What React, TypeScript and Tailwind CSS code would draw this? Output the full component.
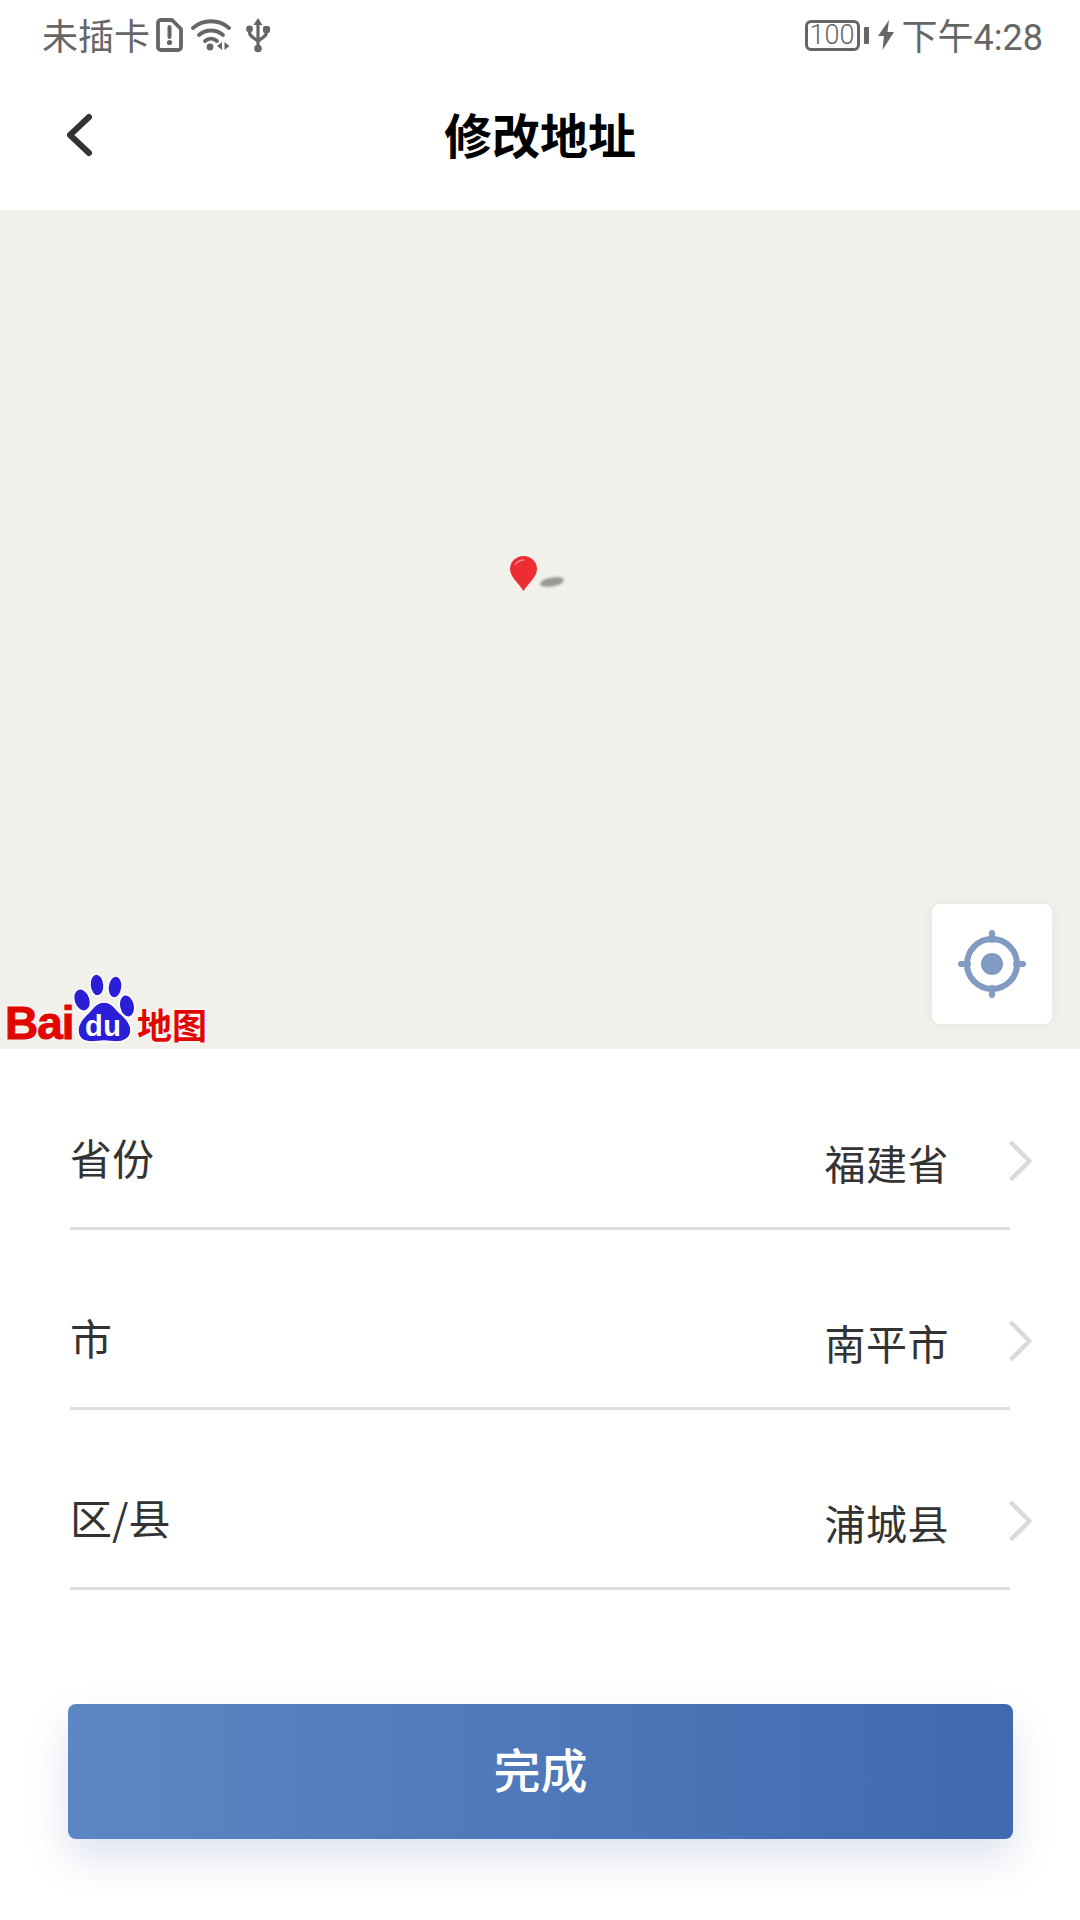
import { ChevronRight } from "lucide-react";

const addressRows = [
  { label: "省份", value: "福建省" },
  { label: "市", value: "南平市" },
  { label: "区/县", value: "浦城县" },
];

const cjk = "font-['Roboto','Noto_Sans_CJK_SC',sans-serif]";

function SimAlert() {
  return (
    <svg width="27" height="34" viewBox="0 0 27 34" fill="none">
      <path d="M5 2h11l9 9v18a3 3 0 0 1-3 3H5a3 3 0 0 1-3-3V5a3 3 0 0 1 3-3z" stroke="#666" strokeWidth="3.8" strokeLinejoin="round" />
      <path d="M13.500 9v10" stroke="#666" strokeWidth="4" strokeLinecap="round" />
      <circle cx="13.500" cy="24.500" r="2.600" fill="#666" />
    </svg>
  );
}

function WifiIcon() {
  return (
    <svg width="40" height="34" viewBox="0 0 40 34" fill="none">
      <path d="M2 10C12 1 28 1 38 10" stroke="#666" strokeWidth="3.800" strokeLinecap="round" />
      <path d="M8 17c7-6 17-6 24 0" stroke="#666" strokeWidth="3.800" strokeLinecap="round" />
      <path d="M14 23c3.500-3 8.500-3 12 0" stroke="#666" strokeWidth="3.800" strokeLinecap="round" />
      <circle cx="19" cy="29" r="3.400" fill="#666" />
      <path d="M31 24v8l-5-4zM33.500 24v8l5-4z" fill="#666" />
    </svg>
  );
}

function UsbIcon() {
  return (
    <svg width="24" height="36" viewBox="0 0 24 36" fill="none">
      <path d="M12 1l4.500 7h-9z" fill="#666" />
      <path d="M12 6v26" stroke="#666" strokeWidth="3.200" />
      <path d="M3.500 12v3c0 4 3 5 8.500 9M20.500 12v3c0 4-3 5-8.500 9" stroke="#666" strokeWidth="3.200" />
      <circle cx="3.500" cy="12" r="3.400" fill="#666" />
      <rect x="17" y="9" width="7" height="7" rx="2" fill="#666" />
      <circle cx="12" cy="31.500" r="3.800" fill="#666" />
    </svg>
  );
}

function ChargeBolt() {
  return (
    <svg width="16" height="30" viewBox="0 0 16 30">
      <path d="M11 0 0 16h6l-1.500 14L16 12H9.500z" fill="#666" />
    </svg>
  );
}

function StatusBar() {
  return (
    <div className={`flex h-[70px] items-center justify-between pl-[42px] pr-[37px] text-[36px] leading-none text-[#666] ${cjk}`}>
      <div className="flex items-center">
        <span className="mt-[5px]">未插卡</span>
        <span className="ml-[6px] flex"><SimAlert /></span>
        <span className="ml-[8px] flex"><WifiIcon /></span>
        <span className="ml-[15px] flex"><UsbIcon /></span>
      </div>
      <div className="flex items-center">
        <div className="flex h-[31px] w-[55px] items-center justify-center rounded-[6px] border-[3px] border-[#666] text-[27px] font-light">100</div>
        <div className="ml-[4px] h-[17px] w-[5px] rounded-[1px] bg-[#666]" />
        <span className="ml-[9px] flex"><ChargeBolt /></span>
        <span className="ml-[8px] mt-[5px]">下午4:28</span>
      </div>
    </div>
  );
}

function NavBar() {
  return (
    <div className="relative flex h-[140px] items-center justify-center pb-[14px]">
      <svg className="absolute left-[64px] top-[42px]" width="32" height="46" viewBox="0 0 32 46" fill="none">
        <path d="M25 5 6 23 25 41" stroke="#333" strokeWidth="6" strokeLinecap="round" strokeLinejoin="round" />
      </svg>
      <h1 className="text-[48px] font-bold leading-none text-black font-['Noto_Sans_CJK_SC',sans-serif]">修改地址</h1>
    </div>
  );
}

function MapPin() {
  return (
    <div className="absolute left-[510px] top-[346px] flex">
      <svg width="70" height="40" viewBox="0 0 70 40">
        <path d="M13.500 35C8 26 0 21 0 13a13.500 13 0 0 1 27 0C27 21 19 26 13.500 35z" fill="#ee2d32" />
        <path d="M5 9c2-3 5-5 9-5" stroke="#f58a8c" strokeWidth="1.500" fill="none" />
        <ellipse cx="42" cy="26" rx="12" ry="4.500" transform="rotate(-10 42 26)" fill="#8a8a86" opacity="0.85" className="blur-[1px]" />
      </svg>
    </div>
  );
}

function BaiduLogo() {
  return (
    <div className="absolute bottom-0 left-0 h-[78px] w-[210px] font-['Liberation_Sans',sans-serif]">
      <span className="absolute left-[5px] top-[28px] text-[46px] font-bold leading-[48px] tracking-[-1px] text-[#e10601] [-webkit-text-stroke:1px_#e10601] [text-shadow:0_0_3px_#fff,0_0_3px_#fff]">Bai</span>
      <svg className="absolute left-[72px] top-0" width="66" height="74" viewBox="0 0 66 74">
        <g fill="#2a1fd6" stroke="#fff" strokeWidth="1.500">
          <ellipse cx="10" cy="29" rx="8" ry="11.500" transform="rotate(-20 10 29)" />
          <ellipse cx="25" cy="14" rx="7" ry="11" transform="rotate(-5 25 14)" />
          <ellipse cx="43" cy="16" rx="7" ry="11" transform="rotate(8 43 16)" />
          <ellipse cx="55" cy="35" rx="7.500" ry="11.500" transform="rotate(-12 55 35)" />
          <path d="M32 31c8 0 11 6 16 11 6 5 11 10 11 17 0 9-8 12-15 12-4 0-8-1-12-1s-8 1-12 1C13 71 6 68 6 59c0-7 5-12 10-17s8-11 16-11z" />
        </g>
      </svg>
      <span className="absolute left-[85px] top-[39px] text-[29px] font-bold leading-[32px] tracking-[0.5px] text-white">du</span>
      <span className="absolute left-[137px] top-[33px] text-[35px] font-bold leading-[40px] text-[#e10601] font-['Noto_Sans_CJK_SC',sans-serif] [text-shadow:0_0_3px_#fff,0_0_3px_#fff]">地图</span>
    </div>
  );
}

function LocateButton() {
  return (
    <div className="absolute bottom-[25px] left-[932px] flex h-[120px] w-[120px] items-center justify-center rounded-[8px] bg-white shadow-[0_0_12px_rgba(0,0,0,0.06)]">
      <svg width="68" height="68" viewBox="0 0 68 68" fill="none">
        <circle cx="34" cy="34" r="25" stroke="#829bc2" strokeWidth="6" />
        <circle cx="34" cy="34" r="11" fill="#829bc2" />
        <path d="M34 3v7M34 58v7M3 34h7M58 34h7" stroke="#829bc2" strokeWidth="6" strokeLinecap="round" />
      </svg>
    </div>
  );
}

function AddressRow({ label, value }: { label: string; value: string }) {
  return (
    <div className="relative flex h-[180px] items-start">
      <div className="ml-[70px] flex h-[180px] w-[940px] justify-between border-b-[3px] border-[#dedede] pr-[61px] font-['Noto_Sans_CJK_SC',sans-serif] text-[#333]">
        <span className="mt-[77px] text-[42px] leading-[60px]">{label}</span>
        <span className="mt-[82px] text-[41px] leading-[60px] tracking-[0.5px]">{value}</span>
      </div>
      <ChevronRight
        className="absolute left-[982px] top-[73px] text-[#dadada]"
        size={76}
        strokeWidth={1.4}
        strokeLinecap="butt"
      />
    </div>
  );
}

export default function App() {
  return (
    <div className="flex h-[1920px] w-[1080px] flex-col overflow-hidden bg-white">
      <StatusBar />
      <NavBar />

      <div className="relative h-[839px] bg-[#f2f0eb]">
        <MapPin />
        <BaiduLogo />
        <LocateButton />
      </div>

      <div className="pt-[1px]">
        {addressRows.map((row) => (
          <AddressRow key={row.label} label={row.label} value={row.value} />
        ))}
      </div>

      <button className="mx-[68px] mt-[114px] flex h-[135px] w-[945px] items-center justify-center rounded-[8px] bg-gradient-to-r from-[#5d86c4] to-[#3f6aae] pb-[6px] text-[47px] font-medium text-white shadow-[0_20px_40px_rgba(70,100,160,0.18)] font-['Noto_Sans_CJK_SC',sans-serif]">
        完成
      </button>
    </div>
  );
}
